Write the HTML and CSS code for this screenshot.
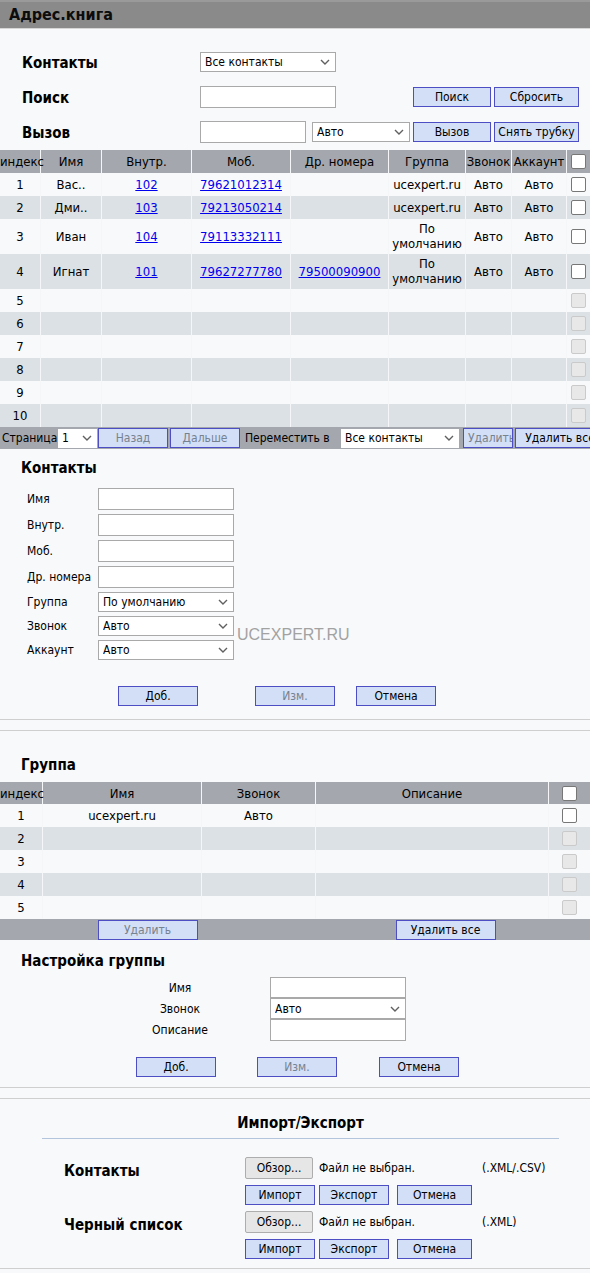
FILE: index.html
```html
<!DOCTYPE html>
<html lang="ru">
<head>
<meta charset="utf-8">
<title>Адрес.книга</title>
<link rel="stylesheet" href="styles.css">
</head>
<body>
<div class="titlebar">Адрес.книга</div>

<div class="search">
  <div class="srow">
    <span class="slabel">Контакты</span>
    <select class="sel w136"><option>Все контакты</option></select>
  </div>
  <div class="srow">
    <span class="slabel">Поиск</span>
    <input class="txt w136" type="text">
    <div class="sbtns">
      <button class="btn b78">Поиск</button>
      <button class="btn b85">Сбросить</button>
    </div>
  </div>
  <div class="srow">
    <span class="slabel">Вызов</span>
    <input class="txt w106" type="text">
    <select class="sel w98 ml6"><option>Авто</option></select>
    <div class="sbtns">
      <button class="btn b78">Вызов</button>
      <button class="btn b85">Снять трубку</button>
    </div>
  </div>
</div>

<table class="grid contacts">
  <thead>
    <tr>
      <th class="k-idx">индекс</th>
      <th class="k-name">Имя</th>
      <th class="k-ext">Внутр.</th>
      <th class="k-mob">Моб.</th>
      <th class="k-oth">Др. номера</th>
      <th class="k-grp">Группа</th>
      <th class="k-ring">Звонок</th>
      <th class="k-acc">Аккаунт</th>
      <th class="k-chk"><input class="cb" type="checkbox"></th>
    </tr>
  </thead>
  <tbody>
    <tr><td>1</td><td>Вас..</td><td><a href="#">102</a></td><td><a href="#">79621012314</a></td><td></td><td>ucexpert.ru</td><td>Авто</td><td>Авто</td><td><input class="cb" type="checkbox"></td></tr>
    <tr class="alt"><td>2</td><td>Дми..</td><td><a href="#">103</a></td><td><a href="#">79213050214</a></td><td></td><td>ucexpert.ru</td><td>Авто</td><td>Авто</td><td><input class="cb" type="checkbox"></td></tr>
    <tr><td>3</td><td>Иван</td><td><a href="#">104</a></td><td><a href="#">79113332111</a></td><td></td><td>По умолчанию</td><td>Авто</td><td>Авто</td><td><input class="cb" type="checkbox"></td></tr>
    <tr class="alt"><td>4</td><td>Игнат</td><td><a href="#">101</a></td><td><a href="#">79627277780</a></td><td><a href="#">79500090900</a></td><td>По умолчанию</td><td>Авто</td><td>Авто</td><td><input class="cb" type="checkbox"></td></tr>
    <tr><td>5</td><td></td><td></td><td></td><td></td><td></td><td></td><td></td><td><input class="cb" type="checkbox" disabled></td></tr>
    <tr class="alt"><td>6</td><td></td><td></td><td></td><td></td><td></td><td></td><td></td><td><input class="cb" type="checkbox" disabled></td></tr>
    <tr><td>7</td><td></td><td></td><td></td><td></td><td></td><td></td><td></td><td><input class="cb" type="checkbox" disabled></td></tr>
    <tr class="alt"><td>8</td><td></td><td></td><td></td><td></td><td></td><td></td><td></td><td><input class="cb" type="checkbox" disabled></td></tr>
    <tr><td>9</td><td></td><td></td><td></td><td></td><td></td><td></td><td></td><td><input class="cb" type="checkbox" disabled></td></tr>
    <tr class="alt"><td>10</td><td></td><td></td><td></td><td></td><td></td><td></td><td></td><td><input class="cb" type="checkbox" disabled></td></tr>
    <tr class="foot">
      <td colspan="9">
        <div class="pager">
          <span class="pg-label">Страница</span>
          <select class="sel plain pg-sel"><option>1</option></select>
          <button class="btn dis pg-prev">Назад</button>
          <button class="btn dis pg-next">Дальше</button>
          <span class="pg-move">Переместить в</span>
          <select class="sel plain pg-target"><option>Все контакты</option></select>
          <button class="btn dis pg-del">Удалить</button>
          <button class="btn pg-delall">Удалить все</button>
        </div>
      </td>
    </tr>
  </tbody>
</table>

<div class="sec-title t-contacts">Контакты</div>
<div class="cform">
  <span class="flabel">Имя</span><input class="txt fin" type="text">
  <span class="flabel">Внутр.</span><input class="txt fin" type="text">
  <span class="flabel">Моб.</span><input class="txt fin" type="text">
  <span class="flabel">Др. номера</span><input class="txt fin" type="text">
  <span class="flabel">Группа</span><select class="sel fsel"><option>По умолчанию</option></select>
  <span class="flabel">Звонок</span><select class="sel fsel"><option>Авто</option></select>
  <span class="flabel">Аккаунт</span><select class="sel fsel"><option>Авто</option></select>
  <span class="watermark">UCEXPERT.RU</span>
</div>
<div class="brow c-btns">
  <button class="btn w80">Доб.</button>
  <button class="btn dis w80 cb2">Изм.</button>
  <button class="btn w80 cb3">Отмена</button>
</div>
<div class="hr hr1"></div>
<div class="hr hr2"></div>

<div class="sec-title t-group">Группа</div>
<table class="grid groups">
  <thead>
    <tr>
      <th class="g-idx">индекс</th>
      <th class="g-name">Имя</th>
      <th class="g-ring">Звонок</th>
      <th class="g-desc">Описание</th>
      <th class="g-chk"><input class="cb" type="checkbox"></th>
    </tr>
  </thead>
  <tbody>
    <tr><td>1</td><td>ucexpert.ru</td><td>Авто</td><td></td><td><input class="cb" type="checkbox"></td></tr>
    <tr class="alt"><td>2</td><td></td><td></td><td></td><td><input class="cb" type="checkbox" disabled></td></tr>
    <tr><td>3</td><td></td><td></td><td></td><td><input class="cb" type="checkbox" disabled></td></tr>
    <tr class="alt"><td>4</td><td></td><td></td><td></td><td><input class="cb" type="checkbox" disabled></td></tr>
    <tr><td>5</td><td></td><td></td><td></td><td><input class="cb" type="checkbox" disabled></td></tr>
    <tr class="foot">
      <td colspan="5">
        <div class="gfoot">
          <button class="btn dis w100">Удалить</button>
          <button class="btn w100">Удалить все</button>
        </div>
      </td>
    </tr>
  </tbody>
</table>

<div class="sec-title t-gset">Настройка группы</div>
<div class="gform">
  <span class="glabel r1">Имя</span><input class="txt gin r1" type="text">
  <span class="glabel r2">Звонок</span><select class="sel gsel r2"><option>Авто</option></select>
  <span class="glabel r3">Описание</span><input class="txt gin r3" type="text">
</div>
<div class="brow g-btns">
  <button class="btn w80">Доб.</button>
  <button class="btn dis w80 gb2">Изм.</button>
  <button class="btn w80 gb3">Отмена</button>
</div>
<div class="hr hr3"></div>
<div class="hr hr4"></div>

<div class="imp">
  <div class="imp-title">Импорт/Экспорт</div>
  <div class="imp-entry e1">
    <div class="imp-label">Контакты</div>
    <div class="imp-ctrls">
      <div class="fileline">
        <button class="browse">Обзор...</button>
        <span class="fname">Файл не выбран.</span>
        <span class="ext">(.XML/.CSV)</span>
      </div>
      <div class="ibtns">
        <button class="btn i-imp">Импорт</button>
        <button class="btn i-exp">Экспорт</button>
        <button class="btn i-can">Отмена</button>
      </div>
    </div>
  </div>
  <div class="imp-entry e2">
    <div class="imp-label">Черный список</div>
    <div class="imp-ctrls">
      <div class="fileline">
        <button class="browse">Обзор...</button>
        <span class="fname">Файл не выбран.</span>
        <span class="ext">(.XML)</span>
      </div>
      <div class="ibtns">
        <button class="btn i-imp">Импорт</button>
        <button class="btn i-exp">Экспорт</button>
        <button class="btn i-can">Отмена</button>
      </div>
    </div>
  </div>
</div>
<div class="hr hr5"></div>
</body>
</html>
```

FILE: styles.css
```css
* { box-sizing: border-box; }

html { overflow-x: hidden; }

body {
  margin: 0;
  width: 590px;
  background: #f7f9fb;
  font-family: "DejaVu Sans Condensed", "DejaVu Sans", sans-serif;
  font-size: 13px;
  color: #000;
}

/* ---------- title ---------- */
.titlebar {
  height: 29px;
  background: #8a8a8a;
  border-top: 2px solid #9a9a9a;
  border-bottom: 1px solid #d6d6d6;
  padding-left: 9px;
  font-weight: bold;
  font-size: 16px;
  line-height: 26px;
  color: #0c0c0c;
}

/* ---------- controls ---------- */
.txt {
  height: 22px;
  margin: 0;
  padding: 0 3px;
  border: 1px solid #a9a9a9;
  border-radius: 0;
  background: #fff;
  font-family: inherit;
  font-size: 12px;
}

.sel {
  -webkit-appearance: none;
  appearance: none;
  height: 20px;
  margin: 0;
  padding: 0 16px 0 4px;
  border: 1px solid #a9a9a9;
  border-radius: 0;
  background: #fff url("data:image/svg+xml,%3Csvg xmlns='http://www.w3.org/2000/svg' width='10' height='6' viewBox='0 0 10 6'%3E%3Cpath d='M1 1l4 4 4-4' fill='none' stroke='%23606060' stroke-width='1.4'/%3E%3C/svg%3E") no-repeat right 5px center;
  font-family: inherit;
  font-size: 12px;
  color: #000;
}

.sel.plain { border: none; }

.btn {
  height: 20px;
  margin: 0;
  padding: 0;
  border: 1px solid #4d4dc4;
  border-radius: 0;
  background: #d3dff6;
  font-family: inherit;
  font-size: 12px;
  color: #000;
  white-space: nowrap;
  overflow: hidden;
}

.btn.dis { color: #77828f; }

.cb {
  -webkit-appearance: none;
  appearance: none;
  display: block;
  width: 15px;
  height: 15px;
  margin: 0 auto;
  border: 1px solid #777;
  border-radius: 2px;
  background: #fff;
}

.cb:disabled {
  background: #e8e8e8;
  border-color: #cacaca;
}

/* ---------- search block ---------- */
.search { padding-top: 15px; margin-bottom: 1px; }

.srow {
  display: flex;
  align-items: center;
  height: 35px;
  padding-right: 11px;
}

.slabel {
  width: 200px;
  padding-left: 22px;
  padding-top: 3px;
  font-weight: bold;
  font-size: 15px;
}

.w136 { width: 136px; }
.w106 { width: 106px; }
.w98 { width: 98px; }
.ml6 { margin-left: 6px; }
.txt.w136 { height: 22px; }
.srow .sel { height: 20px; }

.sbtns {
  display: flex;
  gap: 3px;
  margin-left: auto;
}

.b78 { width: 78px; }
.b85 { width: 85px; }

/* ---------- grids ---------- */
.grid {
  width: 590px;
  table-layout: fixed;
  border-collapse: separate;
  border-spacing: 0;
}

.grid th {
  height: 22px;
  padding: 0;
  background: #a4a7ae;
  font-weight: normal;
  white-space: nowrap;
}

.contacts th { height: 23px; }

.grid td {
  height: 23px;
  padding: 2px 1px 3px;
  line-height: 15px;
  text-align: center;
}

.grid th + th,
.grid td + td { border-left: 1px solid #f4f6f8; }

.grid tr.alt td { background: #dce1e6; }

.grid a { color: #0000ee; }

.grid tr.foot td {
  height: 22px;
  padding: 0;
  background: #a4a7ae;
  text-align: left;
}

.k-idx { width: 40px; }
.k-name { width: 61px; }
.k-ext { width: 90px; }
.k-mob { width: 99px; }
.k-oth { width: 98px; }
.k-grp { width: 77px; }
.k-ring { width: 46px; }
.k-acc { width: 55px; }
.k-chk { width: 24px; }

.pager {
  display: flex;
  align-items: center;
  height: 22px;
  white-space: nowrap;
  font-size: 12px;
}

.pg-label { width: 58px; padding-left: 2px; flex: none; }
.pg-sel { width: 39px; height: 19px; flex: none; }
.pg-prev { width: 70px; margin-left: 1px; flex: none; }
.pg-next { width: 70px; margin-left: 2px; flex: none; }
.pg-move { width: 96px; margin-left: 5px; flex: none; }
.pg-target { width: 118px; height: 19px; flex: none; }
.pg-del { width: 50px; margin-left: 4px; flex: none; text-align: left; padding-left: 4px; }
.pg-delall { width: 90px; margin-left: 2px; flex: none; }

.g-idx { width: 42px; }
.g-name { width: 159px; }
.g-ring { width: 114px; }
.g-desc { width: 233px; }
.g-chk { width: 42px; }

.groups tr.foot td { height: 21px; }

.gfoot {
  display: grid;
  grid-template-columns: 1fr 1fr;
  justify-items: center;
  align-items: center;
  height: 21px;
}

.gfoot .btn:last-child { margin-left: 6px; }

.w100 { width: 100px; }
.w80 { width: 80px; }

/* ---------- section titles ---------- */
.sec-title {
  padding-left: 21px;
  font-weight: bold;
  font-size: 15px;
  line-height: 20px;
}

.t-contacts { margin-top: 9px; }
.t-group { margin-top: 24px; }
.t-gset { margin-top: 11px; }

/* ---------- contact form ---------- */
.cform {
  position: relative;
  display: grid;
  grid-template-columns: 71px 136px;
  row-gap: 4px;
  align-items: center;
  margin-top: 10px;
  padding-left: 27px;
}

.flabel { font-size: 12px; white-space: nowrap; }
.fin { width: 136px; height: 22px; }
.fsel { width: 136px; height: 20px; }

.watermark {
  position: absolute;
  left: 237px;
  top: 138px;
  font-family: "Liberation Sans", Arial, sans-serif;
  font-size: 16px;
  color: #a2a2a2;
}

.brow { display: flex; height: 20px; }

.c-btns { margin-top: 26px; padding-left: 118px; }
.cb2 { margin-left: 57px; }
.cb3 { margin-left: 21px; }

.hr { border-top: 1px solid #cfcfcf; }
.hr1 { margin-top: 13px; }
.hr2 { margin-top: 10px; }

.groups { margin-top: 7px; }

/* ---------- group settings ---------- */
.gform {
  display: grid;
  grid-template-columns: 170px 136px;
  column-gap: 5px;
  align-items: center;
  margin-top: 6px;
  margin-left: 95px;
}

.glabel { text-align: center; font-size: 12px; }
.gin { width: 136px; }
.gin.r1 { height: 21px; }
.gsel { width: 136px; height: 21px; }
.gin.r3 { height: 22px; }

.g-btns { margin-top: 16px; padding-left: 136px; }
.gb2 { margin-left: 41px; }
.gb3 { margin-left: 42px; }

.hr3 { margin-top: 10px; }
.hr4 { margin-top: 10px; }

/* ---------- import / export ---------- */
.imp {
  width: 517px;
  margin-left: 42px;
  margin-top: 14px;
}

.imp-title {
  padding-bottom: 5px;
  border-bottom: 1px solid #b3c5dd;
  text-align: center;
  font-weight: bold;
  font-size: 15px;
  line-height: 20px;
}

.imp-entry {
  display: flex;
  padding-left: 22px;
}

.e1 { margin-top: 18px; }
.e2 { margin-top: 6px; }

.imp-label {
  width: 181px;
  height: 22px;
  padding-top: 3px;
  line-height: 22px;
  font-weight: bold;
  font-size: 15px;
}

.imp-ctrls {
  display: flex;
  flex-direction: column;
  gap: 6px;
}

.fileline {
  display: flex;
  align-items: center;
  height: 22px;
  font-size: 12px;
  white-space: nowrap;
}

.browse {
  width: 68px;
  height: 22px;
  margin: 0;
  padding: 0;
  border: 1px solid #adadad;
  border-radius: 2px;
  background: #e6e6e6;
  font-family: inherit;
  font-size: 12px;
  color: #000;
}

.fname { width: 163px; margin-left: 6px; }

.ibtns { display: flex; }
.i-imp { width: 70px; }
.i-exp { width: 70px; margin-left: 4px; }
.i-can { width: 75px; margin-left: 8px; }

.hr5 { margin-top: 9px; }
```
